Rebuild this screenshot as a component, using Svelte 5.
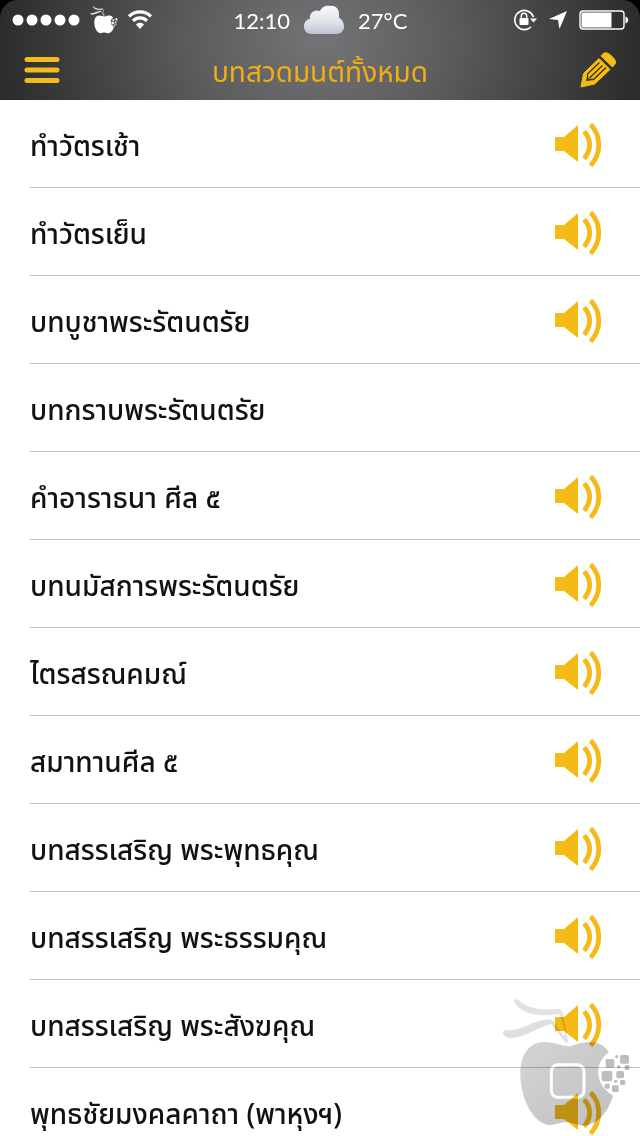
<script lang="ts">
	interface Chant {
		id: number;
		title: string;
		audio: boolean;
	}

	const chants: Chant[] = [
		{ id: 1, title: 'ทำวัตรเช้า', audio: true },
		{ id: 2, title: 'ทำวัตรเย็น', audio: true },
		{ id: 3, title: 'บทบูชาพระรัตนตรัย', audio: true },
		{ id: 4, title: 'บทกราบพระรัตนตรัย', audio: false },
		{ id: 5, title: 'คำอาราธนา ศีล ๕', audio: true },
		{ id: 6, title: 'บทนมัสการพระรัตนตรัย', audio: true },
		{ id: 7, title: 'ไตรสรณคมณ์', audio: true },
		{ id: 8, title: 'สมาทานศีล ๕', audio: true },
		{ id: 9, title: 'บทสรรเสริญ พระพุทธคุณ', audio: true },
		{ id: 10, title: 'บทสรรเสริญ พระธรรมคุณ', audio: true },
		{ id: 11, title: 'บทสรรเสริญ พระสังฆคุณ', audio: true },
		{ id: 12, title: 'พุทธชัยมงคลคาถา (พาหุงฯ)', audio: true }
	];
</script>

{#snippet apple()}
	<path
		d="M240 199C270 187 297 183 320 188C337 193 350 206 357 217C316 243 308 310 369 347C355 397 319 437 281 436C256 436 248 426 230 426C211 426 197 436 174 435C127 425 91 356 91 279C91 225 117 189 157 186C190 184 213 198 240 199Z"
	/>
{/snippet}

{#snippet blades()}
	<path
		d="M72 64C74 54 84 58 88 63C116 86 162 92 205 86C214 86 217 94 219 102L235 188C226 189 218 180 216 174L226 160L209 101C152 112 91 105 72 64Z"
		fill="#e2e2e3"
	/>
	<path
		d="M39 157C41 150 49 150 58 151C96 151 130 121 173 118C182 116 187 120 192 127L234 187H226L184 132C148 139 101 176 58 174C46 172 38 166 39 157Z"
		fill="#dedfe0"
	/>
{/snippet}

{#snippet bits()}
	<rect x="347" y="237" width="26" height="26" rx="5" />
	<rect x="390" y="225" width="27" height="26" rx="5" />
	<rect x="335" y="273" width="32" height="31" rx="6" />
	<rect x="379" y="273" width="23" height="22" rx="5" />
	<rect x="404" y="255" width="14" height="15" rx="4" />
	<rect x="366" y="316" width="20" height="20" rx="4" />
	<rect x="390" y="300" width="16" height="15" rx="4" />
	<rect x="344" y="311" width="15" height="15" rx="4" />
	<circle cx="380" cy="230" r="5" />
	<circle cx="386" cy="260" r="5" />
	<circle cx="377" cy="304" r="5" />
{/snippet}

<div class="app">
	<header>
		<div class="bar">
			<div class="status">
				<div class="side">
					<svg width="68" height="12" viewBox="0 0 68 12" fill="#fff" aria-hidden="true">
						{#each [6, 20, 34, 48, 62] as cx}
							<circle {cx} cy="6" r="5.5" />
						{/each}
					</svg>
					<svg width="28" height="28" viewBox="30 50 396 396" fill="#fff" aria-hidden="true">
						{@render blades()}
						{@render apple()}
						{@render bits()}
					</svg>
					<svg width="24" height="20" viewBox="0 0 24 20" aria-hidden="true">
						<g fill="none" stroke="#fff" stroke-width="3.2">
							<path d="M1 6.4C7 .4 17 .4 23 6.4" />
							<path d="M5 10.8C9 6.8 15 6.8 19 10.8" />
						</g>
						<path d="M12 19L8 14.5C10 12 14 12 16 14.5Z" fill="#fff" />
					</svg>
				</div>
				<div class="middle">
					<span>12:10</span>
					<svg width="42" height="30" viewBox="0 0 42 30" aria-hidden="true">
						<defs>
							<linearGradient id="cloud" x1="0" y1="0" x2="0" y2="1">
								<stop offset="0" stop-color="#f8f9fc" />
								<stop offset="0.6" stop-color="#dfe2ea" />
								<stop offset="1" stop-color="#bcc4d4" />
							</linearGradient>
						</defs>
						<path
							d="M9 29C4 29 1 26 1 21.5C1 17 4 14 7 14C6 8 11 4 17 6C19 1 24 0 27 1C32 0 37 4 36 11L36 13C39 14 41 18 41 21.5C41 26 38 29 33 29Z"
							fill="url(#cloud)"
						/>
					</svg>
					<span>27°C</span>
				</div>
				<div class="side right">
					<svg width="24" height="22" viewBox="0 0 24 22" aria-hidden="true">
						<path d="M20.5 8A9.6 9.6 0 1 0 18 18" fill="none" stroke="#fff" stroke-width="1.6" />
						<path d="M17 9.5H24L20.5 13.5Z" fill="#fff" />
						<rect x="6.5" y="9" width="9" height="7" rx="1" fill="#fff" />
						<path d="M8.3 9V7a2.7 2.7 0 0 1 5.4 0V9" fill="none" stroke="#fff" stroke-width="1.5" />
					</svg>
					<svg width="18" height="18" viewBox="0 0 18 18" aria-hidden="true">
						<path d="M18 0L10.5 18L9 9L0 8Z" fill="#fff" />
					</svg>
					<svg width="50" height="20" viewBox="0 0 50 20" aria-hidden="true">
						<rect x="1" y="1" width="44" height="18" rx="3" fill="none" stroke="#fff" stroke-width="1.4" />
						<rect x="2.5" y="2.5" width="30" height="15" fill="#fff" />
						<path d="M46.5 6.5C50 7 50 13 46.5 13.5Z" fill="#fff" />
					</svg>
				</div>
			</div>
			<div class="nav">
				<button aria-label="เมนู">
					<svg
						width="36"
						height="28"
						viewBox="0 0 36 28"
						fill="none"
						stroke="#f2bd1c"
						stroke-width="5"
						stroke-linecap="round"
					>
						<path d="M3 3.5H33M3 14H33M3 24.5H33" />
					</svg>
				</button>
				<h1>บทสวดมนต์ทั้งหมด</h1>
				<button aria-label="แก้ไข">
					<svg width="36" height="36" viewBox="0 0 36 36" fill="#f5be14">
						<path
							d="M1 35L3.5 21.5L19 6.5L30 17.5L14.5 32Z"
							stroke="#f5be14"
							stroke-linejoin="round"
						/>
						<path
							d="M21.5 4L24 1.5C27-1 37 8 35 11.5L32.5 14.5Z"
							stroke="#f5be14"
							stroke-width="1.5"
							stroke-linejoin="round"
						/>
						<g fill="none" stroke="#3a3018" stroke-width="1.3">
							<path d="M20 5L31.5 16.5" />
							<path d="M19.5 10.5L7.5 22V27.5H13.5L26 15.5" />
							<path d="M22.5 13.5L9.5 26" />
						</g>
						<path d="M7 25L10.5 28.5L6 29Z" fill="#343434" />
					</svg>
				</button>
			</div>
		</div>
	</header>

	<ul>
		{#each chants as chant (chant.id)}
			<li>
				<span class="title">{chant.title}</span>
				{#if chant.audio}
					<button aria-label={`ฟัง ${chant.title}`}>
						<svg width="48" height="46" viewBox="0 0 48 46">
							<path d="M1 16H10L24 4V41L10 30H1Z" fill="#f5ba15" />
							<path
								d="M30 10.5C37.5 18 37.5 29.5 30 37.5M36.5 3.5C47.5 14.5 47.5 32.5 36.5 44.5"
								fill="none"
								stroke="#f5ba15"
								stroke-width="4.8"
							/>
						</svg>
					</button>
				{/if}
			</li>
		{/each}
	</ul>

	<svg class="watermark" width="150" height="156" viewBox="0 0 450 468" aria-hidden="true">
		<defs>
			<linearGradient id="body" x1="0" y1="0" x2="1" y2="1">
				<stop offset="0" stop-color="#d4d4d4" />
				<stop offset="1" stop-color="#c0c0c2" />
			</linearGradient>
			<mask id="key">
				<rect width="450" height="468" fill="#fff" />
				<rect x="184" y="254" width="98" height="98" rx="20" fill="none" stroke="#000" stroke-width="9" />
			</mask>
		</defs>
		<g fill="url(#body)" mask="url(#key)">{@render apple()}</g>
		{@render blades()}
		<g fill="#bdbdbf">{@render bits()}</g>
	</svg>
</div>

<style>
	:global(body) {
		margin: 0;
		background: #fff;
	}

	.app {
		position: relative;
		display: flex;
		flex-direction: column;
		height: 100vh;
		overflow: hidden;
		background: #fff;
		color: #111;
		font-family: 'Noto Sans Thai', 'Noto Sans', 'Open Sans', sans-serif;
	}

	header {
		flex: none;
		background: #000;
	}

	.bar {
		border-radius: 18px 18px 0 0;
		background: radial-gradient(ellipse 50% 250% at 50% 40%, #747476 0%, #5c5c5e 40%, #404041 75%, #2c2c2c 100%);
	}

	.status {
		display: grid;
		grid-template-columns: 1fr auto 1fr;
		align-items: center;
		height: 40px;
		padding: 0 11px 0 12px;
		color: #fff;
		font-family: Lato, 'Open Sans', sans-serif;
		font-size: 22px;
		font-weight: 400;
	}

	.side {
		display: flex;
		align-items: center;
		gap: 10px;
	}

	.middle {
		display: flex;
		align-items: center;
		gap: 13px;
	}

	.right {
		justify-content: flex-end;
		gap: 12px;
	}

	.nav {
		display: flex;
		align-items: center;
		justify-content: space-between;
		height: 60px;
		padding: 0 24px;
	}

	h1 {
		margin: 0;
		padding-top: 8px;
		color: #f0ae12;
		font-size: 28px;
		font-weight: 400;
		line-height: 40px;
	}

	button {
		display: flex;
		padding: 0;
		border: 0;
		background: none;
		cursor: pointer;
	}

	ul {
		flex: 1;
		min-height: 0;
		margin: 0;
		padding: 0 0 0 30px;
		overflow-y: auto;
		scrollbar-width: none;
		list-style: none;
	}

	li {
		display: flex;
		align-items: center;
		justify-content: space-between;
		box-sizing: border-box;
		height: 88px;
		padding-right: 38px;
		border-bottom: 1px solid #c4c4c6;
	}

	.title {
		padding-top: 8px;
		font-size: 28px;
		font-weight: 500;
		line-height: 40px;
		white-space: nowrap;
	}

	.watermark {
		position: absolute;
		right: 0;
		bottom: 0;
		mix-blend-mode: multiply;
		pointer-events: none;
	}
</style>
